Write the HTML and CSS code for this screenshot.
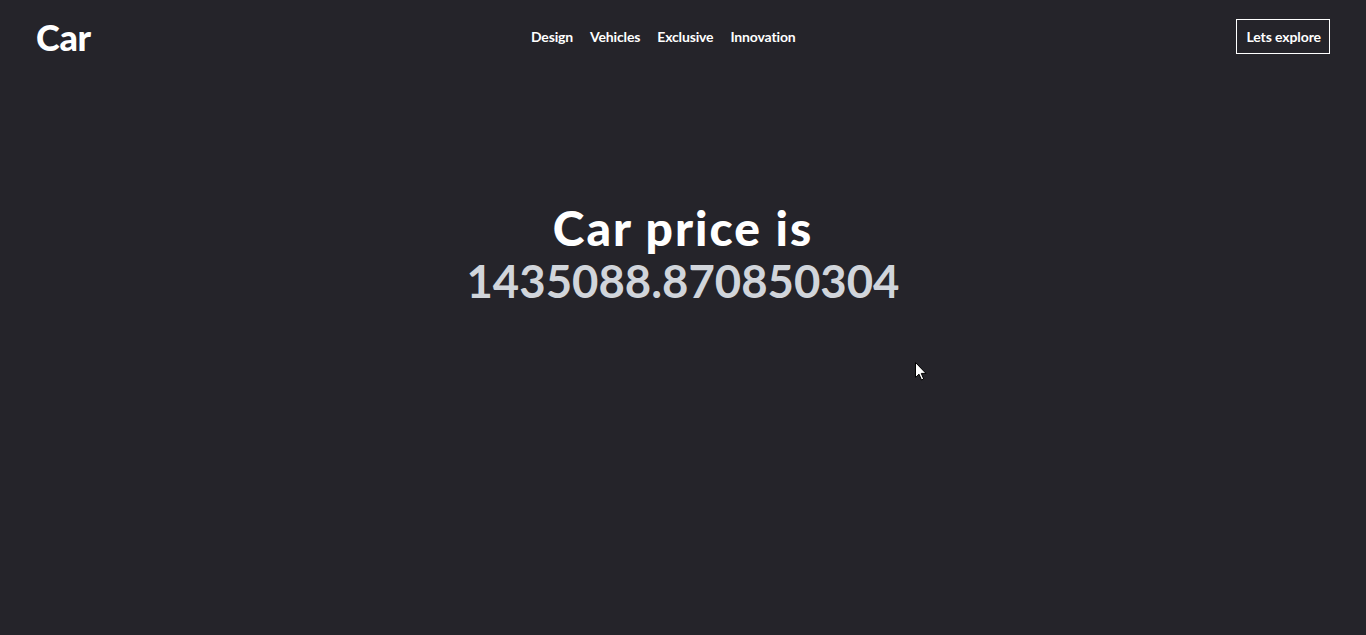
FILE: index.html
```html
<!DOCTYPE html>
<html lang="en">
<head>
<meta charset="utf-8">
<title>Car</title>
<link rel="stylesheet" href="styles.css">
</head>
<body>
<header class="topbar">
  <div class="logo">Car</div>
  <nav class="nav">
    <a href="#">Design</a>
    <a href="#">Vehicles</a>
    <a href="#">Exclusive</a>
    <a href="#">Innovation</a>
  </nav>
  <a class="explore" href="#">Lets explore</a>
</header>
<main class="hero">
  <h1 class="title">Car price is</h1>
  <p class="price">1435088.870850304</p>
</main>
<svg class="cursor" width="12" height="19" viewBox="0 0 12 19" aria-hidden="true">
  <path d="M0.5 0.5 L0.5 15.5 L4 12.2 L6.5 18 L8.7 17 L6.3 11.4 L11 11.4 Z" fill="#fff" stroke="#000" stroke-width="1"/>
</svg>
</body>
</html>
```
FILE: styles.css
```css
html, body {
  margin: 0;
  padding: 0;
  height: 100%;
}
body {
  background: #25242a;
  color: #fff;
  font-family: "Lato", "Open Sans", sans-serif;
  overflow: hidden;
}
.topbar {
  display: flex;
  align-items: center;
  justify-content: space-between;
  padding: 19px 36px 0 36px;
  height: 35px;
}
.logo {
  font-size: 36px;
  font-weight: 900;
  line-height: 1;
  width: 300px;
  letter-spacing: -0.3px;
}
.nav {
  display: flex;
  gap: 17px;
  margin-left: 24px;
}
.nav a {
  color: #fff;
  text-decoration: none;
  font-size: 14px;
  font-weight: 700;
  letter-spacing: -0.15px;
}
.explore {
  color: #fff;
  text-decoration: none;
  font-size: 14px;
  font-weight: 700;
  border: 1px solid #fff;
  padding: 8px 8px 8px 9px;
  margin-left: 270px;
  letter-spacing: -0.1px;
}
.hero {
  display: flex;
  flex-direction: column;
  align-items: center;
  margin-top: 148px;
}
.title {
  margin: 0;
  font-size: 48px;
  font-weight: 900;
  line-height: 52px;
  letter-spacing: 2px;
}
.price {
  margin: 0;
  font-size: 45.5px;
  font-weight: 700;
  line-height: 54px;
  color: #d1d5db;
}
.cursor {
  position: absolute;
  left: 915px;
  top: 362px;
}
```
